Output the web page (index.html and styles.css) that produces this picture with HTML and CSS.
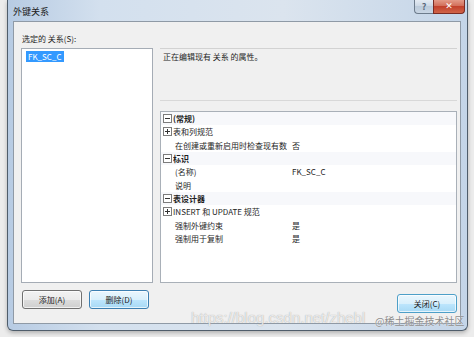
FILE: index.html
```html
<!DOCTYPE html>
<html lang="zh-CN">
<head>
  <meta charset="UTF-8">
  <title>外键关系</title>
  <link rel="stylesheet" href="styles.css">
</head>
<body>
  <div class="window">
    <div class="titlebar">
      <span class="title">外键关系</span>
      <div class="caption-buttons">
        <div class="cap cap-help">?</div>
        <div class="cap cap-x">✕</div>
      </div>
    </div>

    <div class="client">
      <div class="label">选定的 关系(S):</div>

      <div class="main">
        <div class="list">
          <span class="item selected">FK_SC_C</span>
        </div>

        <div class="right">
          <div class="desc">正在编辑现有 关系 的属性。</div>

          <div class="grid">
            <div class="row cat"><span class="tog minus"></span><span class="name">(常规)</span></div>
            <div class="row"><span class="tog plus"></span><span class="name">表和列规范</span></div>
            <div class="row child"><span class="tog"></span><span class="name">在创建或重新启用时检查现有数</span><span class="value">否</span></div>
            <div class="row cat"><span class="tog minus"></span><span class="name">标识</span></div>
            <div class="row child"><span class="tog"></span><span class="name">(名称)</span><span class="value">FK_SC_C</span></div>
            <div class="row child"><span class="tog"></span><span class="name">说明</span></div>
            <div class="row cat"><span class="tog minus"></span><span class="name">表设计器</span></div>
            <div class="row"><span class="tog plus"></span><span class="name">INSERT 和 UPDATE 规范</span></div>
            <div class="row child"><span class="tog"></span><span class="name">强制外键约束</span><span class="value">是</span></div>
            <div class="row child"><span class="tog"></span><span class="name">强制用于复制</span><span class="value">是</span></div>
          </div>
        </div>
      </div>

      <div class="buttons">
        <button class="btn">添加(A)</button>
        <button class="btn hot">删除(D)</button>
        <button class="btn hot btn-default">关闭(C)</button>
      </div>
    </div>
  </div>

  <div class="wm-url">https://blog.csdn.net/zhebl</div>
  <div class="wm-site">@稀土掘金技术社区</div>
</body>
</html>
```

FILE: styles.css
```css
body {
  margin: 0;
  width: 474px;
  height: 337px;
  overflow: hidden;
  position: relative;
  background-color: #ececec;
  font-family: "Noto Sans CJK SC", "Noto Sans", sans-serif;
  font-size: 8px;
  color: #1e1e1e;
}

.window {
  margin-left: 7px;
  width: 461px;
  height: 331px;
  box-sizing: border-box;
  border: 1px solid #4f5d6b;
  border-top: none;
  border-radius: 0 0 6px 6px;
  background: linear-gradient(90deg, #b7cbe3, #d3e0ee 20%, #dbe4ee 60%, #c4d5e8);
  padding: 0 6px 6px 5px;
  display: flex;
  flex-direction: column;
  box-shadow: 0 2px 4px rgba(0,0,0,0.25);
}

.titlebar {
  height: 21px;
  flex-shrink: 0;
  display: flex;
  align-items: flex-start;
}

.title {
  margin-top: 5px;
  font-size: 9px;
  color: #1a1a1a;
}

.caption-buttons {
  margin-left: auto;
  margin-right: -4px;
  display: flex;
  flex-shrink: 0;
}

.cap {
  height: 14px;
  box-sizing: border-box;
  text-align: center;
  line-height: 13px;
  font-size: 9px;
  font-weight: bold;
}

.cap-help {
  width: 19px;
  border: 1px solid #6d7c8c;
  border-top: none;
  border-right: none;
  border-radius: 0 0 0 4px;
  background: linear-gradient(#e4ebf3, #cbd7e4 50%, #bccbdb 50%, #c9d6e4);
  color: #5a6b7d;
}

.cap-x {
  width: 32px;
  border: 1px solid #7a2c24;
  border-top: none;
  border-radius: 0 0 4px 0;
  background-color: #c8503c;
  background-image: linear-gradient(#e39a88, #d06a55 50%, #c2412c 50%, #d06448);
  color: #ffffff;
  font-family: "DejaVu Sans", sans-serif;
}

.client {
  flex: 1;
  background-color: #f0f0f0;
  border: 1px solid #8f9aa6;
  padding: 10px 3px 0 7px;
  display: flex;
  flex-direction: column;
}

.label {
  height: 14px;
  line-height: 14px;
  margin: 0 0 2px 1px;
}

.main {
  display: flex;
  gap: 7px;
  height: 235px;
}

.list {
  width: 132px;
  box-sizing: border-box;
  border: 1px solid #a5acb5;
  background-color: #fff;
  padding: 2px 0 0 4px;
}

.item {
  display: inline-block;
  line-height: 11px;
  padding: 0 2px;
}

.selected {
  background-color: #3399ff;
  color: #fff;
}

.right {
  flex: 1;
  display: flex;
  flex-direction: column;
}

.desc {
  height: 53px;
  box-sizing: border-box;
  border-top: 1px solid #d2d2d2;
  border-bottom: 1px solid #d8d8d8;
  padding: 2px 3px;
  line-height: 12px;
  margin-bottom: 10px;
}

.grid {
  flex: 1;
  border: 1px solid #a9b0b8;
  background-color: #fff;
}

.row {
  display: flex;
  align-items: center;
  height: 13.3px;
  line-height: 13px;
  white-space: nowrap;
}

.cat {
  background-color: #f7f8fb;
  font-weight: bold;
}

.tog {
  width: 9px;
  height: 9px;
  box-sizing: border-box;
  margin: 0 1px 0 2px;
  position: relative;
  flex-shrink: 0;
}

.minus, .plus {
  border: 1px solid #7c7c7c;
  background-color: #fff;
}

.minus::before, .plus::before {
  content: "";
  position: absolute;
  left: 1px;
  top: 3px;
  width: 5px;
  height: 1px;
  background-color: #333;
}

.plus::after {
  content: "";
  position: absolute;
  left: 3px;
  top: 1px;
  width: 1px;
  height: 5px;
  background-color: #333;
}

.name {
  width: 118px;
  flex-shrink: 0;
  box-sizing: border-box;
  overflow: hidden;
}

.child .name {
  width: 114px;
  margin-right: 4px;
  padding-left: 2px;
}

.value {
  padding-left: 1px;
}

.buttons {
  display: flex;
  align-items: flex-start;
  gap: 7px;
  margin-top: 7px;
  padding-left: 1px;
}

.btn {
  width: 60px;
  height: 19px;
  padding: 0;
  font-family: inherit;
  font-size: 8px;
  color: #222;
  border: 1px solid #707070;
  border-radius: 3px;
  background: linear-gradient(#f2f2f2, #ebebeb 50%, #dddddd 50%, #cfcfcf);
  box-shadow: inset 0 0 0 1px rgba(255,255,255,0.7);
}

.hot {
  border-color: #3c7fb1;
  background: linear-gradient(#eaf6fd, #d9f0fc 50%, #bee6fd 50%, #a7d9f5);
}

.btn-default {
  margin-left: auto;
  margin-top: 4px;
  border-color: #4d9fc8;
}

.wm-url {
  position: absolute;
  left: 191px;
  top: 309px;
  font-family: "Liberation Sans", sans-serif;
  font-size: 15px;
  color: rgba(255,255,255,0.75);
  text-shadow: 0 0 1px #999;
}

.wm-site {
  position: absolute;
  left: 375px;
  top: 313px;
  font-size: 10px;
  color: #8c8c8c;
  text-shadow: 0 0 1px #fff;
}
```
